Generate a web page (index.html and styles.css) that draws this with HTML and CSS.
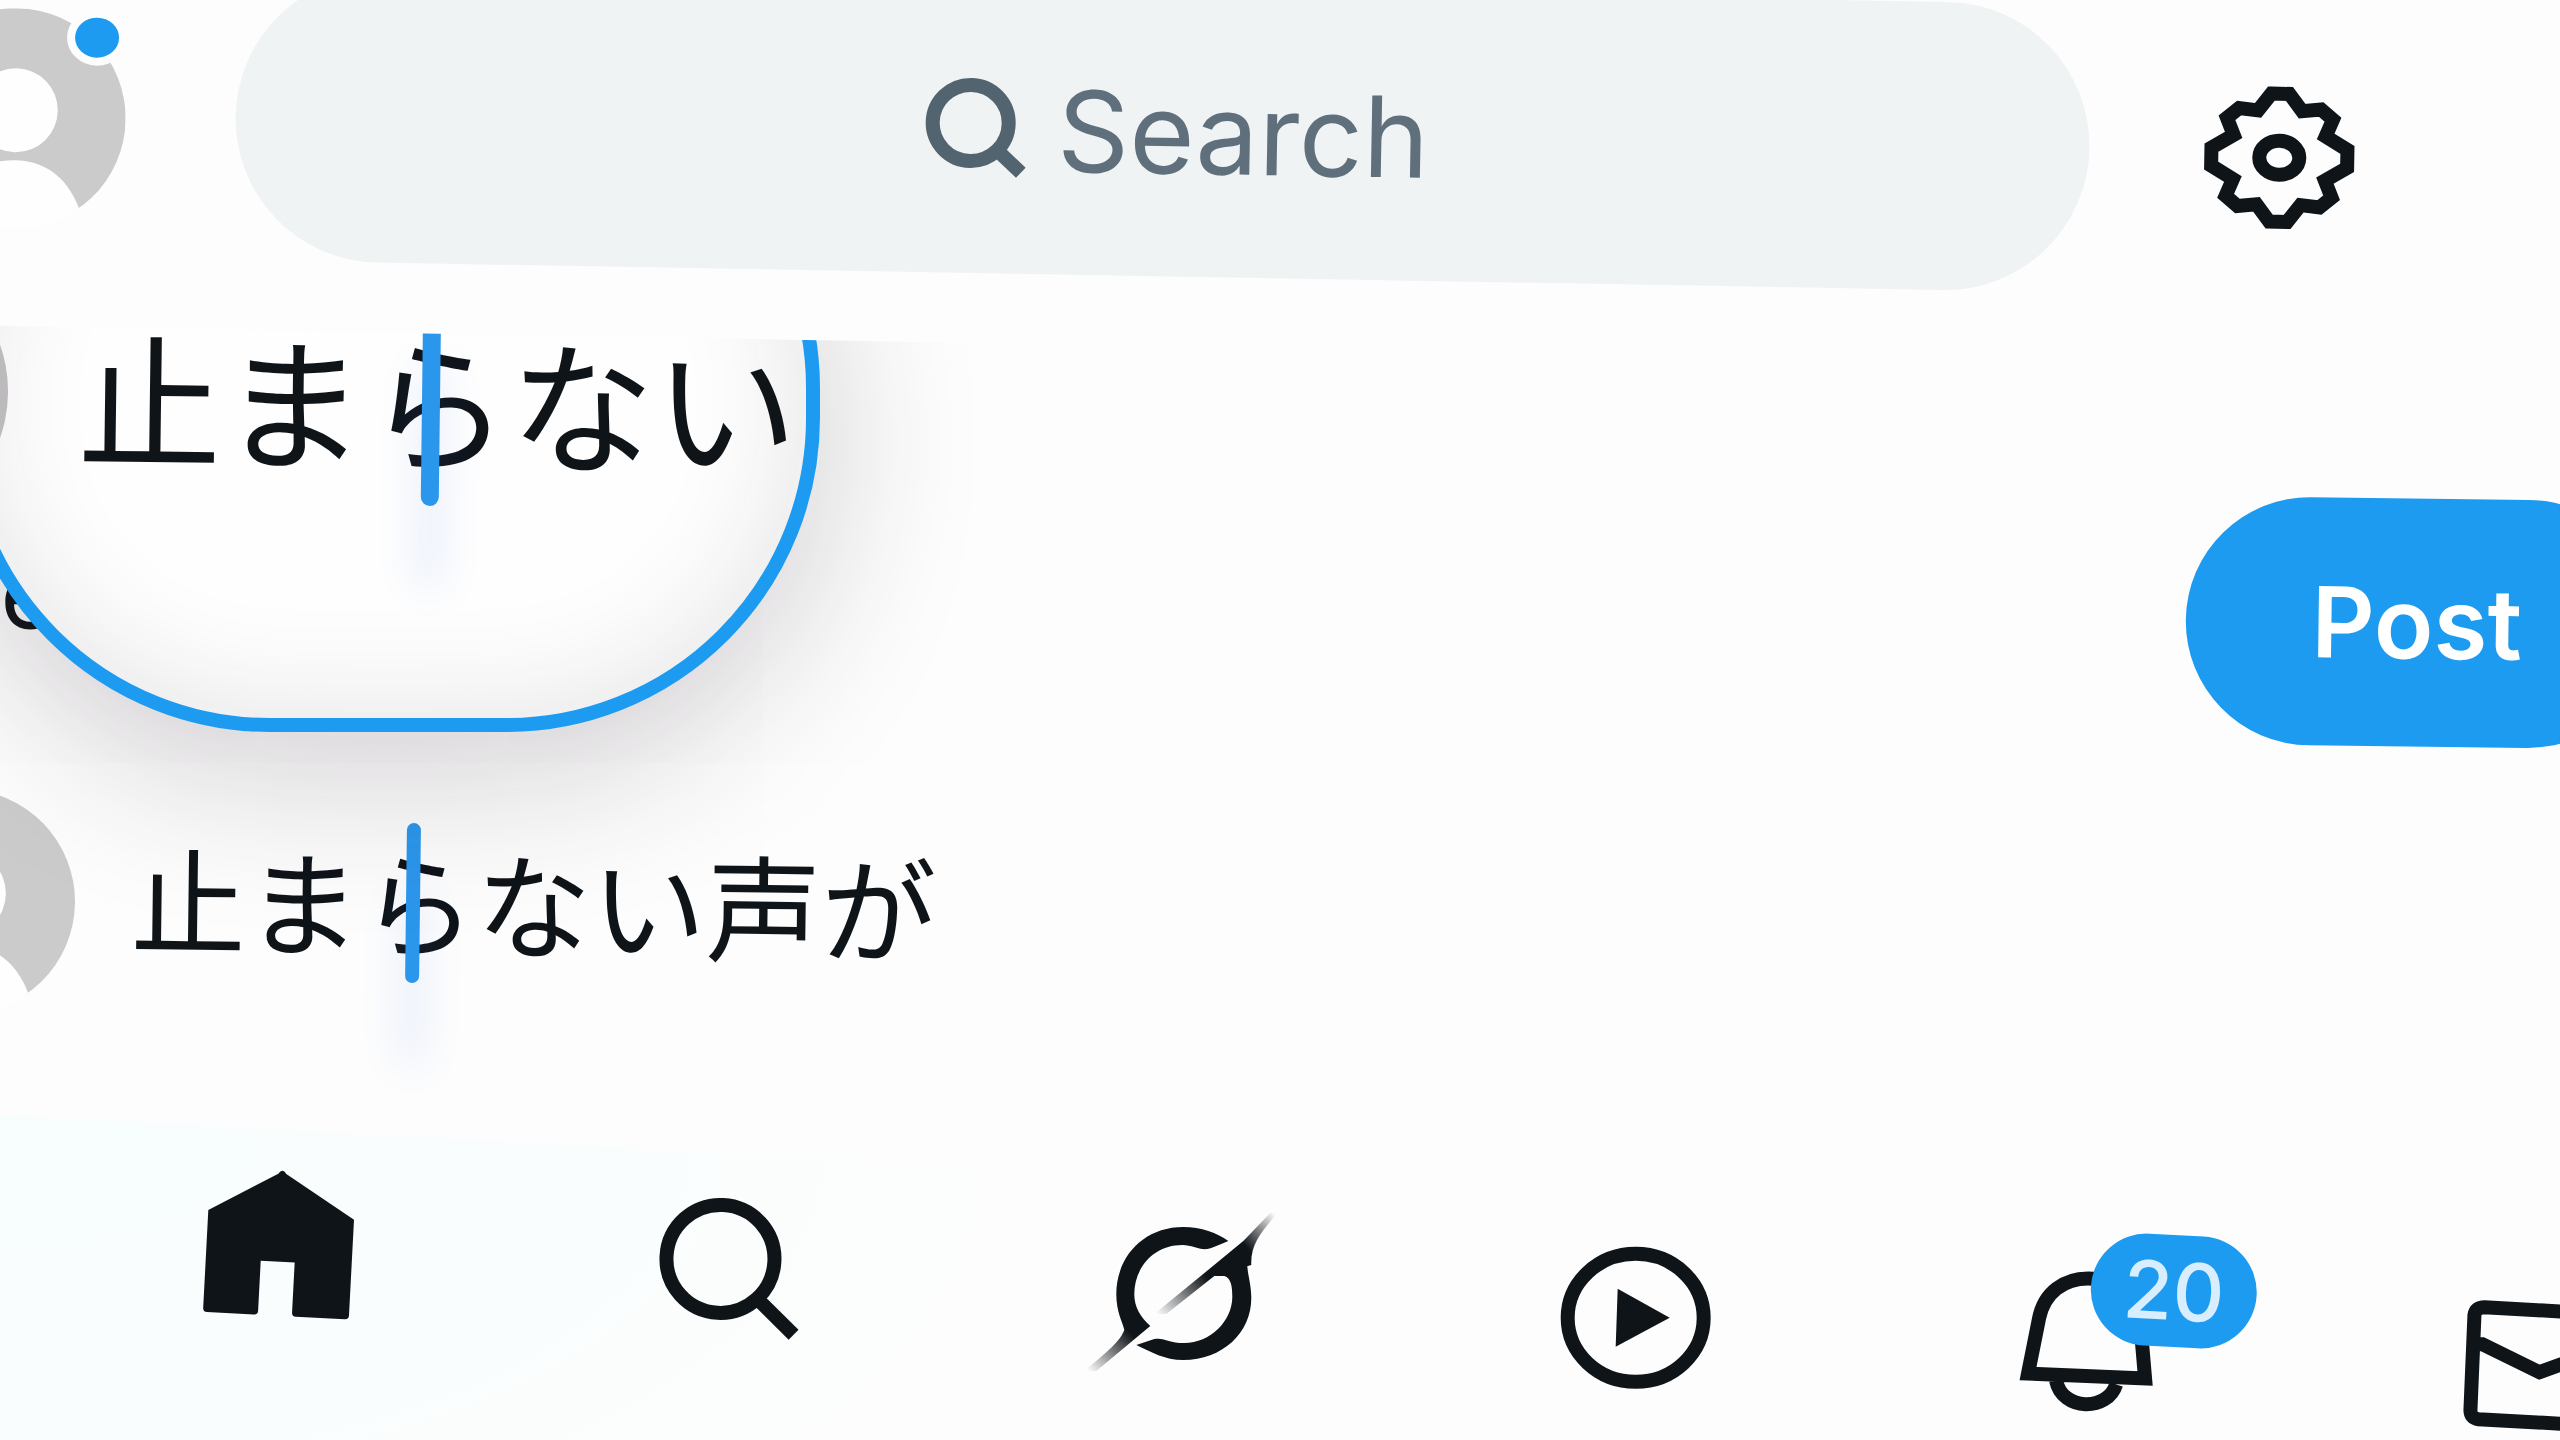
FILE: index.html
```
<!DOCTYPE html>
<html lang="en">
<head>
<meta charset="utf-8">
<meta name="viewport" content="width=device-width, initial-scale=1">
<title>Compose</title>
<link rel="stylesheet" href="styles.css">
</head>
<body>
<div class="app">
  <header class="topbar">
    <a class="avatar" href="#profile" aria-label="Profile">
      <svg viewBox="0 0 220 220" aria-hidden="true"><circle class="av-bg" cx="110" cy="110" r="110"/><circle class="av-fg" cx="110" cy="102" r="42"/><path class="av-fg" d="M40 200C50 166 82 152 110 152S162 166 175 199A110 110 0 0 1 40 200Z"/></svg>
      <span class="avatar-dot"></span>
    </a>
    <label class="search">
      <svg class="search-icon" viewBox="0 0 110 110" aria-hidden="true"><circle cx="49" cy="49" r="38"/><path d="M76 76L100 98"/></svg>
      <input class="search-input" type="text" placeholder="Search" aria-label="Search">
    </label>
    <button class="icon-button" type="button" aria-label="Settings">
      <svg class="icon" viewBox="0 0 160 160" aria-hidden="true"><g transform="translate(80 86)"><path d="M-9-64H9L22-47L41-49L53-39L46-22L68-9V9L46 22L53 39L41 49L22 47L9 64H-9L-22 47L-41 49L-53 39L-46 22L-68 9V-9L-46-22L-53-39L-41-49L-22-47Z"/><ellipse rx="20" ry="17"/></g></svg>
    </button>
  </header>

  <main class="composer">
    <div class="actions">
      <button class="cancel" type="button">Cancel</button>
      <button class="post" type="button">Post</button>
    </div>
    <div class="draft">
      <svg class="draft-avatar" viewBox="0 0 220 220" aria-hidden="true"><circle class="av-bg" cx="110" cy="110" r="110"/><circle class="av-fg" cx="110" cy="102" r="42"/><path class="av-fg" d="M40 200C50 166 82 152 110 152S162 166 175 199A110 110 0 0 1 40 200Z"/></svg>
      <div class="field">
        <input class="draft-input" type="text" lang="ja" value="止まらない声が" aria-label="Post text">
        <span class="caret"></span>
      </div>
    </div>
    <div class="loupe" aria-hidden="true">
      <div class="loupe-row">
        <span class="loupe-avatar"></span>
        <span class="loupe-text" lang="ja">止まらない</span>
      </div>
      <span class="caret caret-large"></span>
    </div>
  </main>

  <nav class="tabs" aria-label="Main">
    <a class="tab" href="#home" aria-label="Home">
      <svg class="icon" viewBox="0 0 160 160" aria-hidden="true"><path class="solid" d="M80 5Q82 5 84 8L154 50V146Q154 150 150 150H101Q97 150 97 146V96H63V146Q63 150 59 150H12Q8 150 8 146V48L76 8Q78 5 80 5Z"/></svg>
    </a>
    <a class="tab" href="#explore" aria-label="Explore">
      <svg class="icon" viewBox="0 0 160 160" aria-hidden="true"><circle cx="69" cy="70" r="54"/><path d="M108 108L146 142"/></svg>
    </a>
    <a class="tab" href="#grok" aria-label="Grok">
      <svg class="icon" viewBox="0 0 160 160" aria-hidden="true">
        <defs>
          <linearGradient id="tail" gradientUnits="userSpaceOnUse" x1="-14" y1="158" x2="26" y2="118"><stop offset="0" stop-color="#0f1419" stop-opacity="0"/><stop offset="1" stop-color="#0f1419"/></linearGradient>
          <linearGradient id="slash" gradientUnits="userSpaceOnUse" x1="56" y1="103" x2="172" y2="0"><stop offset="0" stop-color="#0f1419" stop-opacity="0"/><stop offset=".4" stop-color="#0f1419"/><stop offset=".72" stop-color="#0f1419"/><stop offset="1" stop-color="#0f1419" stop-opacity="0"/></linearGradient>
        </defs>
        <g transform="rotate(-3 80 80)">
          <path class="plain" fill="url(#tail)" d="M126 28C115 20 99 14 81 14C41 14 14 44 14 81C14 99 20 108 22 117C18 128 6 138-18 158H-6L48 113C38 104 32 94 32 81C32 54 52 32 80 32C90 32 96 37 105 36Q110 35 126 28Z"/>
          <path class="solid" d="M146 36C142 56 149 66 149 85C149 120 120 147 81 147C62 147 49 139 34 132L52 126C62 124 66 130 82 130C108 130 130 108 130 84C130 74 129 65 122 63L112 63Z"/>
          <path class="plain" fill="url(#slash)" d="M168 0H175C160 18 148 30 149 52L112 63L64 101H52L141 28Z"/>
        </g>
      </svg>
    </a>
    <a class="tab" href="#video" aria-label="Video">
      <svg class="icon" viewBox="0 0 160 160" aria-hidden="true"><g transform="rotate(-3 80 80)"><ellipse cx="81" cy="81" rx="68" ry="64"/><path class="solid" d="M63 52L115 81L61 110Z"/></g></svg>
    </a>
    <a class="tab" href="#notifications" aria-label="Notifications">
      <span class="badged">
        <svg class="icon" viewBox="0 0 160 160" aria-hidden="true"><g transform="rotate(-3 80 80)"><path d="M22 113L33 58C38 32 58 18 82 18C110 18 132 46 136 83L139 118ZM50 120C56 151 102 151 110 124"/></g></svg>
        <span class="badge">20</span>
      </span>
    </a>
    <a class="tab" href="#messages" aria-label="Messages">
      <svg class="icon" viewBox="0 0 160 160" aria-hidden="true"><g transform="rotate(-3 80 80)"><path d="M26 23L150 30Q156 30 156 36L152 136Q152 142 146 142L20 135Q12 134 12 126L16 31Q17 23 26 23ZM16 60H24L81 88L142 66H154"/></g></svg>
    </a>
  </nav>
</div>
</body>
</html>
```
FILE: styles.css
```
* { box-sizing: border-box; }

:root {
  --page: #fdfdfd;
  --ink: #0f1419;
  --blue: #1d9bf0;
  --ui: "Inter", "Roboto", sans-serif;
  --jp: "Noto Sans CJK JP", sans-serif;
}

body {
  margin: 0;
  background: var(--page);
  color: var(--ink);
  font-family: var(--ui);
}

button, input {
  margin: 0;
  padding: 0;
  border: 0;
  background: none;
  font: inherit;
  color: inherit;
}

.app {
  display: flex;
  flex-direction: column;
  height: 100vh;
  overflow: hidden;
}

.icon {
  display: block;
  width: 160px;
  height: 160px;
  overflow: visible;
  fill: none;
  stroke: var(--ink);
  stroke-width: 14px;
}
.icon .solid { fill: var(--ink); stroke: none; }
.icon .plain { stroke: none; }

.av-bg { fill: #cbcbcb; }
.av-fg { fill: #fefefe; }

/* Top bar */
.topbar {
  position: relative;
  z-index: 1;
  flex: none;
  display: flex;
  align-items: center;
  gap: 110px;
  margin: -32px -100px 0;
  padding: 0 304px 70px 2px;
  background: var(--page);
  transform: rotate(1deg);
  transform-origin: 100px 100%;
}

.avatar {
  position: relative;
  flex: none;
  width: 220px;
  height: 220px;
  margin-top: 12px;
}
.avatar svg { display: block; }
.avatar-dot {
  position: absolute;
  top: 0;
  right: 0;
  width: 60px;
  height: 56px;
  border: 8px solid var(--page);
  border-radius: 50%;
  background: var(--blue);
}

.search {
  flex: 1;
  display: flex;
  align-items: center;
  justify-content: center;
  gap: 26px;
  height: 288px;
  padding-left: 22px;
  border-radius: 144px;
  background: #eff3f4;
  color: #536471;
}
.search-icon {
  width: 110px;
  height: 110px;
  fill: none;
  stroke: currentColor;
  stroke-width: 14px;
}
.search-input {
  width: 368px;
  font-size: 112px;
  line-height: 136px;
}
.search-input::placeholder { color: #5f707c; opacity: 1; }

/* Composer */
.composer {
  position: relative;
  flex: 1;
  min-height: 0;
  padding-top: 143px;
}

.actions {
  display: flex;
  align-items: center;
  justify-content: space-between;
  margin: 0 -92px 73px -240px;
  transform: rotate(0.7deg);
  transform-origin: 240px 50%;
}
.cancel {
  font-size: 98px;
  line-height: 120px;
}
.post {
  width: 466px;
  height: 248px;
  padding-right: 4px;
  border-radius: 124px;
  background: var(--blue);
  color: #fff;
  font-size: 98px;
  font-weight: 600;
}

.draft {
  display: flex;
  align-items: center;
  gap: 56px;
  margin-left: -149px;
  transform: rotate(0.7deg);
  transform-origin: 149px 50%;
}
.draft-avatar {
  flex: none;
  width: 224px;
  height: 224px;
}
.field {
  position: relative;
  flex: 1;
}
.draft-input {
  display: block;
  width: 100%;
  padding-bottom: 16px;
  font-family: var(--jp);
  font-size: 115px;
  line-height: 160px;
}

.caret {
  position: absolute;
  top: 4px;
  left: 275px;
  width: 14px;
  height: 160px;
  border-radius: 7px;
  background: #2b97ec;
  box-shadow: 0 76px 36px 8px rgba(80, 130, 240, 0.1);
}

/* Magnifier over the draft */
.loupe {
  position: absolute;
  top: -252px;
  left: -44px;
  display: flex;
  align-items: center;
  width: 864px;
  height: 658px;
  overflow: hidden;
  border: 14px solid var(--blue);
  border-radius: 314px;
  background: #fefefe;
  box-shadow: 0 40px 160px rgba(50, 35, 50, 0.22), inset 0 0 120px rgba(50, 35, 50, 0.12);
}
.loupe-row {
  display: flex;
  align-items: center;
  gap: 70px;
  margin: 0 0 14px -242px;
  transform: rotate(0.7deg);
}
.loupe-avatar {
  flex: none;
  width: 280px;
  height: 280px;
  border-radius: 50%;
  background: #bcbabc;
}
.loupe-text {
  font-family: var(--jp);
  font-size: 144px;
  line-height: 200px;
  white-space: nowrap;
}
.caret-large {
  top: 208px;
  left: 452px;
  width: 18px;
  height: 210px;
  border-radius: 9px;
  transform: rotate(0.7deg);
}

/* Tab bar */
.tabs {
  flex: none;
  display: flex;
  align-items: flex-start;
  height: 325px;
  margin-right: -214px;
  padding: 36px 0 0 59px;
  background: radial-gradient(1000px 500px at 0 0, #f8fdfe, #fafdfe 60%, var(--page));
  transform: rotate(3deg);
  transform-origin: 0 0;
}
.tab {
  flex: 1;
  display: flex;
  justify-content: center;
}
.badged { position: relative; }
.badge {
  position: absolute;
  top: -30px;
  left: 82px;
  width: 166px;
  height: 112px;
  border-radius: 56px;
  background: var(--blue);
  color: #d8edfd;
  font-size: 80px;
  font-weight: 500;
  line-height: 112px;
  text-align: center;
}
```
